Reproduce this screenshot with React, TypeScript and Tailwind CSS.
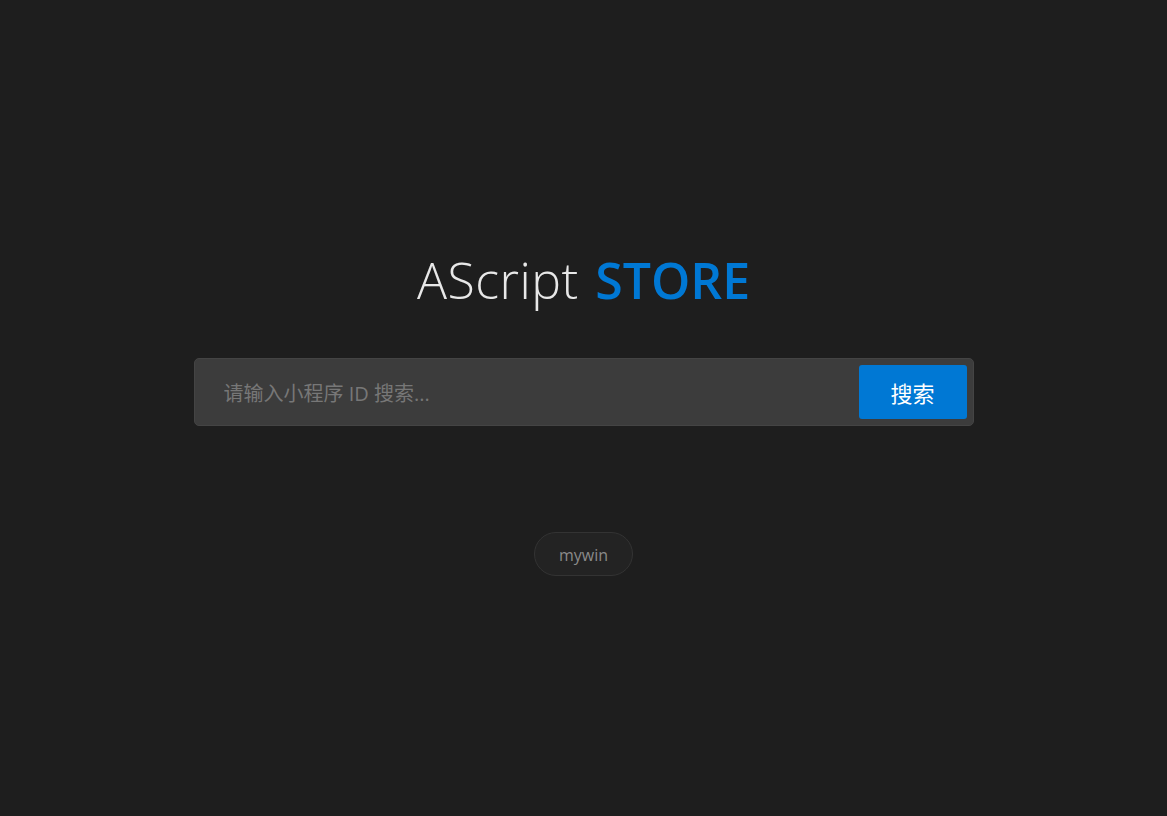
import React from "react";

const App = () => {
  return (
    <div className="min-h-screen w-full bg-[#1e1e1e] flex flex-col items-center pt-[246px] font-['Open_Sans','Noto_Sans_CJK_SC',sans-serif]">
      <h1 className="text-[50px] leading-[68px] text-[#e8e8e8] font-light tracking-[0.5px]">
        AScript <span className="ml-[3px] text-[#0078d4] font-semibold tracking-[0px]">STORE</span>
      </h1>
      <div className="mt-[44px] w-[780px] h-[68px] bg-[#3c3c3c] rounded-[5px] border border-[#444] flex items-center p-[6px]">
        <input
          className="flex-1 h-full bg-transparent outline-none pl-[23px] pt-[2px] text-[20px] text-[#ddd] placeholder:text-[#777]"
          placeholder="请输入小程序 ID 搜索..."
        />
        <button className="w-[108px] h-[54px] bg-[#0078d4] rounded-[3px] text-white text-[22px] font-['Noto_Sans_CJK_SC',sans-serif]">
          搜索
        </button>
      </div>
      <div className="mt-[106px]">
        <span className="inline-flex items-center justify-center w-[99px] h-[44px] rounded-full border border-[#333] bg-[#232323] text-[#8a8a8a] text-[16px] pt-[1px]">
          mywin
        </span>
      </div>
    </div>
  );
};

export default App;
